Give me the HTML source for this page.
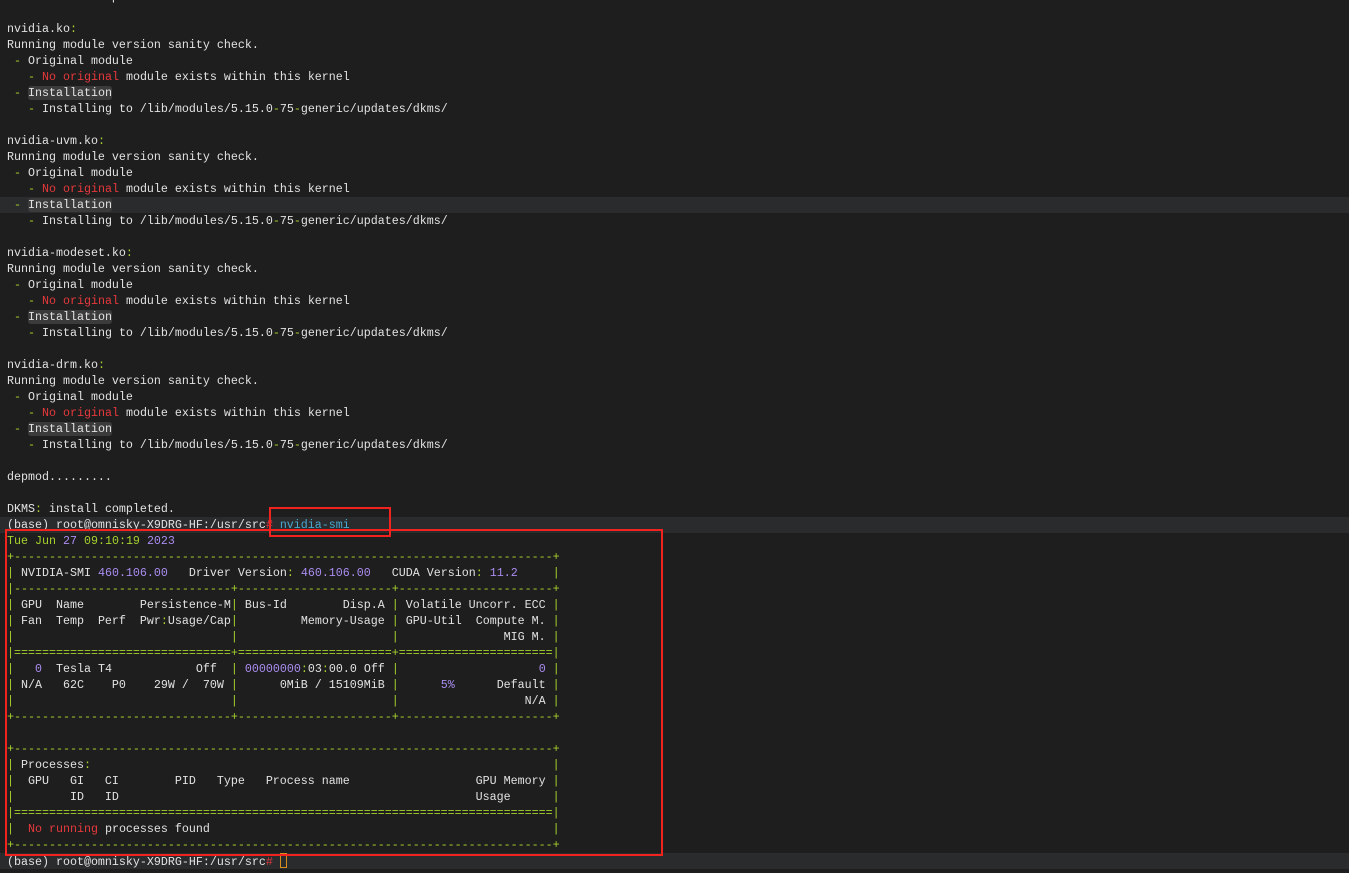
<!DOCTYPE html>
<html><head><meta charset="utf-8"><style>
html,body{margin:0;padding:0;background:#1e1e1e;width:1349px;height:873px;overflow:hidden;position:relative}
pre{margin:0;position:absolute;left:7px;top:-11px;font-family:"Liberation Mono",monospace;font-size:11.67px;line-height:16px;color:#e2e2e2;white-space:pre}
.g{color:#a6d22e}.p{color:#a98cf0}.r{color:#e5393c}.c{color:#4aa8d0}
.hl{position:absolute;left:0;width:1349px;height:16px;background:#2a2b2c}
.ins{background:#3b3b3b;border-radius:3px}
.box{position:absolute;border:2px solid #f2221e;box-sizing:border-box}
.cur{display:inline-block;width:5px;height:13px;border:1px solid #d98c1e;vertical-align:-3px}
</style></head><body>
<div class="hl" style="top:197px"></div>
<div class="hl" style="top:517px"></div>
<div class="hl" style="top:853px"></div>
<pre>DKMS<span class="g">:</span> build completed.

nvidia.ko<span class="g">:</span>
Running module version sanity check.
 <span class="g">-</span> Original module
   <span class="g">-</span> <span class="r">No original</span> module exists within this kernel
 <span class="g">-</span> <span class="ins">Installation</span>
   <span class="g">-</span> Installing to /lib/modules/5.15.0<span class="g">-</span>75<span class="g">-</span>generic/updates/dkms/

nvidia-uvm.ko<span class="g">:</span>
Running module version sanity check.
 <span class="g">-</span> Original module
   <span class="g">-</span> <span class="r">No original</span> module exists within this kernel
 <span class="g">-</span> <span class="ins">Installation</span>
   <span class="g">-</span> Installing to /lib/modules/5.15.0<span class="g">-</span>75<span class="g">-</span>generic/updates/dkms/

nvidia-modeset.ko<span class="g">:</span>
Running module version sanity check.
 <span class="g">-</span> Original module
   <span class="g">-</span> <span class="r">No original</span> module exists within this kernel
 <span class="g">-</span> <span class="ins">Installation</span>
   <span class="g">-</span> Installing to /lib/modules/5.15.0<span class="g">-</span>75<span class="g">-</span>generic/updates/dkms/

nvidia-drm.ko<span class="g">:</span>
Running module version sanity check.
 <span class="g">-</span> Original module
   <span class="g">-</span> <span class="r">No original</span> module exists within this kernel
 <span class="g">-</span> <span class="ins">Installation</span>
   <span class="g">-</span> Installing to /lib/modules/5.15.0<span class="g">-</span>75<span class="g">-</span>generic/updates/dkms/

depmod.........

DKMS<span class="g">:</span> install completed.
(base) root@omnisky-X9DRG-HF:/usr/src<span class="r">#</span> <span class="c">nvidia-smi</span>
<span class="g">Tue Jun </span><span class="p">27</span> <span class="g">09:10:19</span> <span class="p">2023</span>
<span class="g">+-----------------------------------------------------------------------------+</span>
<span class="g">|</span> NVIDIA-SMI <span class="p">460.106.00</span>   Driver Version<span class="g">:</span> <span class="p">460.106.00</span>   CUDA Version<span class="g">:</span> <span class="p">11.2</span>     <span class="g">|</span>
<span class="g">|-------------------------------+----------------------+----------------------+</span>
<span class="g">|</span> GPU  Name        Persistence-M<span class="g">|</span> Bus-Id        Disp.A <span class="g">|</span> Volatile Uncorr. ECC <span class="g">|</span>
<span class="g">|</span> Fan  Temp  Perf  Pwr<span class="g">:</span>Usage/Cap<span class="g">|</span>         Memory-Usage <span class="g">|</span> GPU-Util  Compute M. <span class="g">|</span>
<span class="g">|</span>                               <span class="g">|</span>                      <span class="g">|</span>               MIG M. <span class="g">|</span>
<span class="g">|===============================+======================+======================|</span>
<span class="g">|</span>   <span class="p">0</span>  Tesla T4            Off  <span class="g">|</span> <span class="p">00000000</span><span class="g">:</span>03<span class="g">:</span>00.0 Off <span class="g">|</span>                    <span class="p">0</span> <span class="g">|</span>
<span class="g">|</span> N/A   62C    P0    29W /  70W <span class="g">|</span>      0MiB / 15109MiB <span class="g">|</span>      <span class="p">5%</span>      Default <span class="g">|</span>
<span class="g">|</span>                               <span class="g">|</span>                      <span class="g">|</span>                  N/A <span class="g">|</span>
<span class="g">+-------------------------------+----------------------+----------------------+</span>

<span class="g">+-----------------------------------------------------------------------------+</span>
<span class="g">|</span> Processes<span class="g">:</span>                                                                  <span class="g">|</span>
<span class="g">|</span>  GPU   GI   CI        PID   Type   Process name                  GPU Memory <span class="g">|</span>
<span class="g">|</span>        ID   ID                                                   Usage      <span class="g">|</span>
<span class="g">|=============================================================================|</span>
<span class="g">|</span>  <span class="r">No running</span> processes found                                                 <span class="g">|</span>
<span class="g">+-----------------------------------------------------------------------------+</span>
(base) root@omnisky-X9DRG-HF:/usr/src<span class="r">#</span> <span class="cur"></span></pre>
<div class="box" style="left:269px;top:507px;width:122px;height:30px"></div>
<div class="box" style="left:5px;top:529px;width:658px;height:327px"></div>
</body></html>
